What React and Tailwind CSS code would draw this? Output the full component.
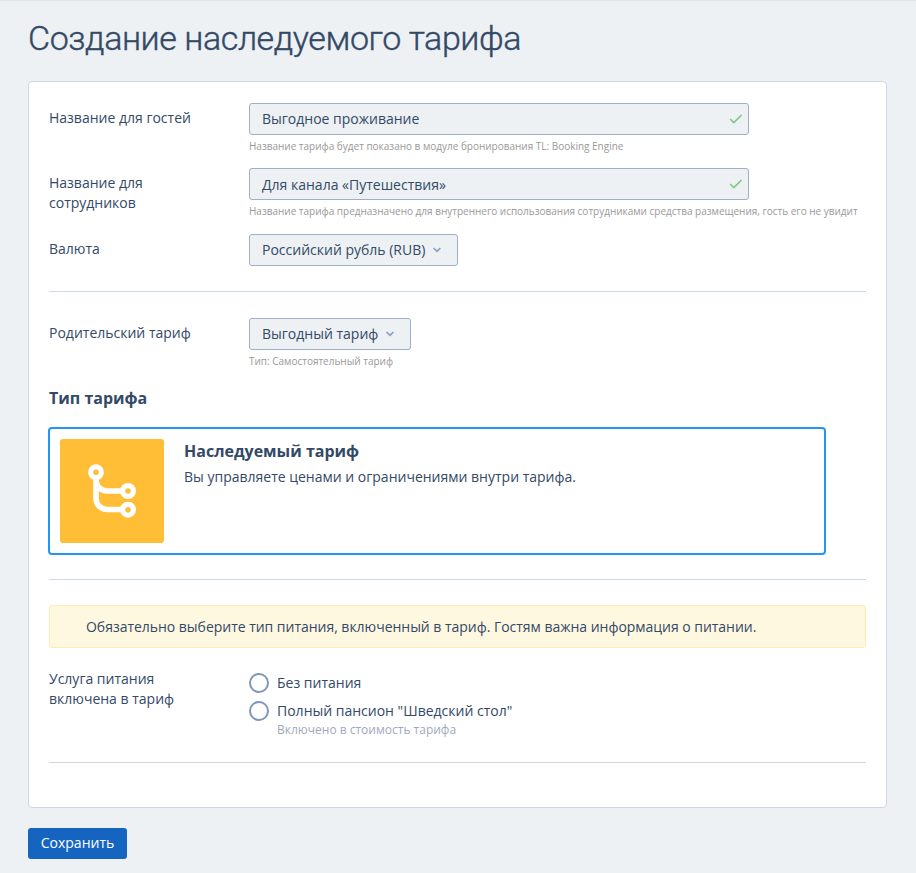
const mealOptions = [
    { id: 'none', label: 'Без питания' },
    { id: 'full', label: 'Полный пансион "Шведский стол"', note: 'Включено в стоимость тарифа' },
];

function Row({ label, className, children }) {
    return (
        <div className={`flex ${className}`}>
            <div className="w-[200px] shrink-0 pr-12 pt-[5px]">{label}</div>
            <div className="min-w-0 flex-1">{children}</div>
        </div>
    );
}

function Hint({ children }) {
    return <p className="mt-[3px] whitespace-nowrap text-[10px] leading-4 tracking-[-0.01px] text-[#999999]">{children}</p>;
}

function TextField({ value, className }) {
    return (
        <div className="flex h-8 w-[500px] items-center justify-between rounded-[3px] border border-[#9fafca] bg-[#edf1f4] pl-3 pr-1.5">
            <span className={className}>{value}</span>
            <svg className="h-[10px] w-[13px]" viewBox="0 0 13 10" fill="none" stroke="#81c784" strokeWidth="1.6">
                <path d="M1.2 5L4.8 8.6L12.6 1" />
            </svg>
        </div>
    );
}

function Select({ value, className }) {
    return (
        <button className={`flex h-8 items-center rounded-[3px] border border-[#9fafca] bg-[#edf1f4] pl-3 ${className}`}>
            <span className="whitespace-nowrap">{value}</span>
            <svg className="ml-2 h-[6px] w-2" viewBox="0 0 8 6" fill="none" stroke="#8b9dc0" strokeWidth="1.7">
                <path d="M0.6 1L4 4.4L7.4 1" />
            </svg>
        </button>
    );
}

function Divider({ className }) {
    return <hr className={`border-t border-[#cfd6e4] ${className}`} />;
}

function TreeIcon() {
    return (
        <svg className="h-[104px] w-[104px] rounded-[3px] bg-[#ffbe36]" viewBox="0 0 104 104" fill="none" stroke="#ffffff">
            <path d="M36 39V59.5A11 11 0 0 0 47 70.5H62M36 41A11 11 0 0 0 47 52H62" strokeWidth="5.6" />
            <circle cx="36" cy="33.3" r="5.4" strokeWidth="5.2" />
            <circle cx="68" cy="52" r="5.4" strokeWidth="5.2" />
            <circle cx="68" cy="70.7" r="5.4" strokeWidth="5.2" />
        </svg>
    );
}

export default function App() {
    return (
        <div className="h-[873px] overflow-hidden border-t border-[#e1e5e8] bg-[#edf1f4] px-7 font-['Open_Sans','Noto_Sans',sans-serif] text-sm leading-5 text-[#334966]">
            <h1 className="mt-[14px] h-[46px] whitespace-nowrap font-['Roboto','Open_Sans',sans-serif] text-[34px] font-light leading-[46px] tracking-[-0.43px] [-webkit-text-stroke:0.4px_#334966]">
                Создание наследуемого тарифа
            </h1>

            <div className="mt-5 h-[727px] w-[859px] rounded border border-[#cfd6e4] bg-white px-5 pt-[21px]">
                <Row label="Название для гостей" className="h-[65px]">
                    <TextField value="Выгодное проживание" />
                    <Hint>Название тарифа будет показано в модуле бронирования TL: Booking Engine</Hint>
                </Row>
                <Row label="Название для сотрудников" className="h-[66px]">
                    <TextField value="Для канала «Путешествия»" className="pt-0.5" />
                    <Hint>Название тарифа предназначено для внутреннего использования сотрудниками средства размещения, гость его не увидит</Hint>
                </Row>
                <Row label="Валюта" className="h-[57px]">
                    <Select value="Российский рубль (RUB)" className="w-[209px]" />
                </Row>
                <Divider className="mb-[26px]" />

                <Row label="Родительский тариф" className="h-[68px]">
                    <Select value="Выгодный тариф" className="w-[162px]" />
                    <Hint>Тип: Самостоятельный тариф</Hint>
                </Row>
                <h2 className="h-[41px] text-base font-bold leading-6">Тип тарифа</h2>

                {/* Selected rate type */}
                <div className="-ml-px flex h-32 w-[778px] gap-5 rounded border-2 border-[#2196f3] p-[10px]">
                    <TreeIcon />
                    <div>
                        <h3 className="text-base font-bold leading-6">Наследуемый тариф</h3>
                        <p className="mt-1">Вы управляете ценами и ограничениями внутри тарифа.</p>
                    </div>
                </div>
                <Divider className="mt-6 mb-[25px]" />

                <div className="flex h-[43px] items-center rounded-[3px] border border-[#ffecb3] bg-[#fff8e1] pl-9 tracking-[-0.025px]">
                    Обязательно выберите тип питания, включенный в тариф. Гостям важна информация о питании.
                </div>

                <div className="mt-[21px] flex h-[93px]">
                    <div className="w-[200px] shrink-0 pr-12">Услуга питания включена в тариф</div>
                    <div className="pt-1">
                        {mealOptions.map((option) => (
                            <div key={option.id} className="mb-2 flex gap-2">
                                <span className="h-5 w-5 shrink-0 rounded-full border-2 border-[#8196bb] bg-white" />
                                <div>
                                    <div>{option.label}</div>
                                    {option.note && <div className="text-xs leading-[18px] text-[#9fa9bd]">{option.note}</div>}
                                </div>
                            </div>
                        ))}
                    </div>
                </div>
                <Divider />
            </div>

            <button className="mt-5 h-[31px] w-[99px] rounded-[3px] bg-[#1565c0] pb-0.5 text-white">Сохранить</button>
        </div>
    );
}
